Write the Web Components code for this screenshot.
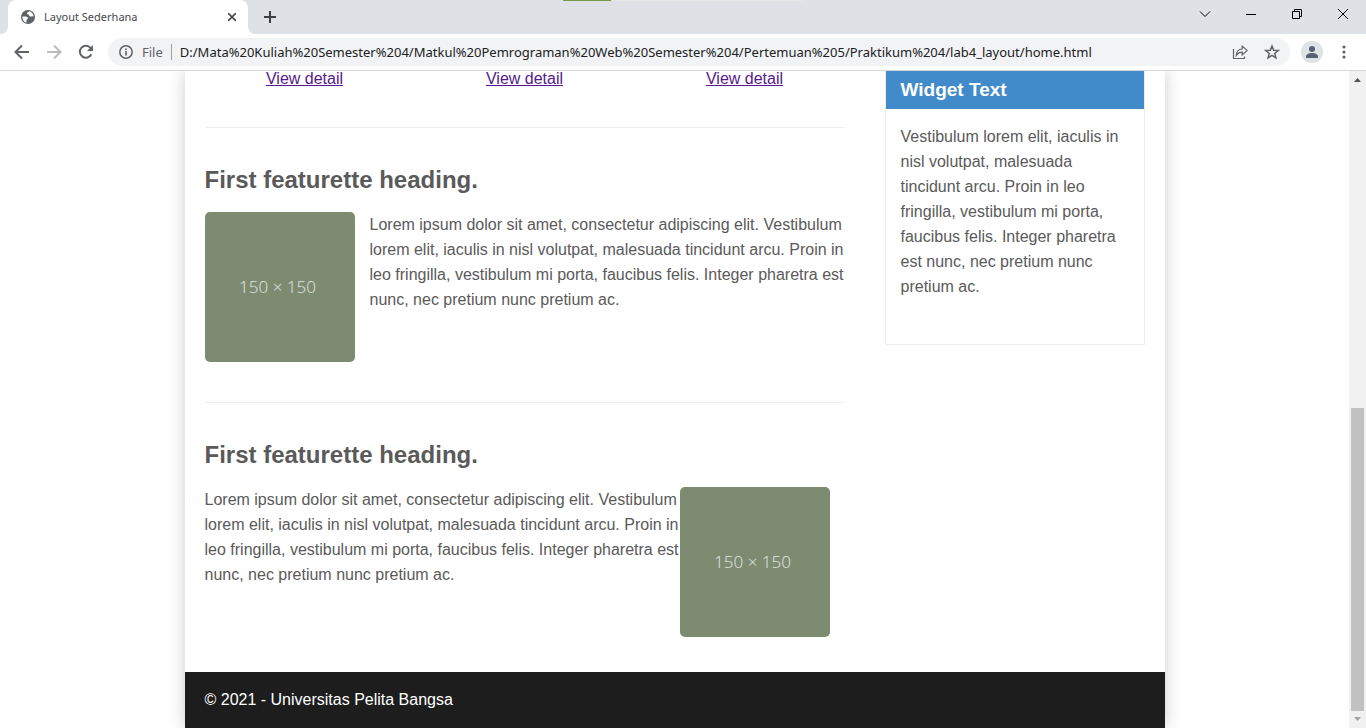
<!DOCTYPE html>
<html lang="id">
<head>
<meta charset="utf-8">
<title>Layout Sederhana</title>
<style>
html, body { height: 100%; margin: 0; }
body { display: flex; flex-direction: column; overflow: hidden; background: #fff; font-family: "Liberation Sans", Arial, sans-serif; font-size: 16px; line-height: 25px; color: #5a5a5a; }
</style>
</head>
<body>
<browser-tabs><browser-tab>Layout Sederhana</browser-tab></browser-tabs>
<browser-toolbar url="D:/Mata%20Kuliah%20Semester%204/Matkul%20Pemrograman%20Web%20Semester%204/Pertemuan%205/Praktikum%204/lab4_layout/home.html"></browser-toolbar>
<page-view>
  <site-page>
    <detail-links></detail-links>
    <feature-item>
      <span slot="heading">First featurette heading.</span>
      Lorem ipsum dolor sit amet, consectetur adipiscing elit. Vestibulum lorem elit, iaculis in nisl volutpat, malesuada tincidunt arcu. Proin in leo fringilla, vestibulum mi porta, faucibus felis. Integer pharetra est nunc, nec pretium nunc pretium ac.
    </feature-item>
    <feature-item reverse>
      <span slot="heading">First featurette heading.</span>
      Lorem ipsum dolor sit amet, consectetur adipiscing elit. Vestibulum lorem elit, iaculis in nisl volutpat, malesuada tincidunt arcu. Proin in leo fringilla, vestibulum mi porta, faucibus felis. Integer pharetra est nunc, nec pretium nunc pretium ac.
    </feature-item>
    <side-widget slot="aside">
      <span slot="heading">Widget Text</span>
      Vestibulum lorem elit, iaculis in nisl volutpat, malesuada tincidunt arcu. Proin in leo fringilla, vestibulum mi porta, faucibus felis. Integer pharetra est nunc, nec pretium nunc pretium ac.
    </side-widget>
    <span slot="footer">© 2021 - Universitas Pelita Bangsa</span>
  </site-page>
</page-view>
<script>
const define = (name, html) => customElements.define(name, class extends HTMLElement {
  constructor() {
    super();
    const t = document.createElement('template');
    t.innerHTML = html;
    this.attachShadow({ mode: 'open' }).append(t.content.cloneNode(true));
  }
  connectedCallback() {
    const url = this.shadowRoot.querySelector('input');
    if (url) url.value = this.getAttribute('url');
  }
});
const button = `button { border: 0; padding: 0; margin: 0; background: none; display: grid; place-items: center; color: inherit; flex: none; }
svg { display: block; fill: none; stroke: currentColor; }`;

define('browser-tabs', `<style>
:host { display: flex; flex: none; height: 34px; background: #dee1e6; padding-left: 8px; position: relative; color: #3c4043; }
${button}
.new { width: 28px; height: 34px; margin-left: 8px; }
.win { display: flex; margin-left: auto; color: #000; }
.win button { width: 46px; height: 28px; }
.share { position: absolute; top: 0; left: calc(50% - 120px); width: 240px; height: 1px; background: linear-gradient(90deg, #739b48 20%, #e6e6e6 20%); }
</style>
<slot></slot>
<button class="new" aria-label="New tab"><svg width="14" height="14" viewBox="0 0 14 14" stroke-width="2"><path d="M7 1v12M1 7h12"/></svg></button>
<div class="win">
<button aria-label="Search tabs"><svg width="12" height="12" viewBox="0 0 12 12"><path d="M1 3.5 6 8.500 11 3.500"/></svg></button>
<button aria-label="Minimize"><svg width="10" height="10" viewBox="0 0 10 10"><path d="M0 5.500h10"/></svg></button>
<button aria-label="Restore"><svg width="10" height="10" viewBox="0 0 10 10"><path d="M.5 2.500h7v7h-7zM2.500 2.500v-2h7v7h-2"/></svg></button>
<button aria-label="Close window"><svg width="10" height="10" viewBox="0 0 10 10"><path d="M0 0 10 10M10 0 0 10"/></svg></button>
</div>
<div class="share"></div>`);

define('browser-tab', `<style>
:host { display: flex; align-items: center; box-sizing: border-box; width: 240px; height: 34px; padding: 0 8px 0 12px; gap: 8px; background: #fff; border-radius: 8px 8px 0 0; position: relative; font: 11px/16px "Noto Sans", "Segoe UI", sans-serif; color: #45494d; }
:host::before, :host::after { content: ""; position: absolute; bottom: 0; width: 8px; height: 8px; }
:host::before { left: -8px; background: radial-gradient(circle at 0 0, transparent 8px, #fff 8px); }
:host::after { right: -8px; background: radial-gradient(circle at 100% 0, transparent 8px, #fff 8px); }
${button}
.title { flex: 1; white-space: nowrap; }
button { width: 16px; height: 16px; }
</style>
<svg width="16" height="16" viewBox="0 0 16 16"><circle cx="8" cy="8" r="7" fill="#5f6368" stroke="none"/><path d="M2.500 7.500C5 7.300 7.500 7.500 8 9c.3 1.200-1.500 1-1.500 2.200V13.600C4 13.300 2.300 11 2.500 7.500zM9.500 2.300c-.8 1-2.500.7-2.500 2.200 0 1 1.600.5 2 1.500.4 1.200 1.300 1.700 2.300 1.500s1.500-.6 2.300.2C13.500 5 12 2.800 9.500 2.300z" fill="#fff" stroke="none"/></svg>
<span class="title"><slot></slot></span>
<button aria-label="Close tab"><svg width="8" height="8" viewBox="0 0 8 8" stroke-width="1.600"><path d="M0 0 8 8M8 0 0 8"/></svg></button>`);

define('browser-toolbar', `<style>
:host { display: flex; flex: none; align-items: center; height: 36px; padding: 0 8px; gap: 4px; border-bottom: 1px solid #d5d7da; background: #fff; color: #5f6368; font: 13px/20px "Noto Sans", "Segoe UI", sans-serif; }
${button}
button { width: 28px; height: 28px; }
.dim { color: #babcbe; }
.box { flex: 1; min-width: 0; display: flex; align-items: center; height: 28px; margin: 0 4px; padding: 0 4px; border-radius: 14px; background: #f1f3f4; gap: 4px; }
label { padding: 0 8px 0 0; margin-left: -2px; border-right: 1px solid #9aa0a6; line-height: 16px; }
input { flex: 1; min-width: 0; border: 0; padding: 0; margin-left: 4px; background: none; font: inherit; color: #202124; outline: 0; }
</style>
<button aria-label="Back"><svg width="16" height="16" viewBox="0 0 16 16" stroke-width="2"><path d="M15 8H2M8 1.500 1.500 8 8 14.500"/></svg></button>
<button class="dim" aria-label="Forward"><svg width="16" height="16" viewBox="0 0 16 16" stroke-width="2"><path d="M1 8h13M8 1.500 14.500 8 8 14.500"/></svg></button>
<button aria-label="Reload"><svg width="16" height="16" viewBox="0 0 16 16" stroke-width="2"><path d="M13.300 10.300A6 6 0 1 1 12.600 4L14 5.400"/><path d="M15 1v6H9z" fill="currentColor" stroke="none"/></svg></button>
<div class="box">
<button aria-label="Site information"><svg width="16" height="16" viewBox="0 0 16 16"><circle cx="8" cy="8" r="6.200" stroke-width="1.500"/><path d="M8 7v4.500M8 4.500V6" stroke-width="1.600"/></svg></button>
<label for="url">File</label><input id="url" type="text" spellcheck="false">
<button aria-label="Share"><svg width="16" height="16" viewBox="0 0 16 16" stroke-width="1.200"><path d="M1.500 5v9.500h11v-2"/><path d="M4.300 11.300C4.500 7.500 6.500 5.200 10.200 5V2l5 4.500-5 4.500V8.200C7.500 8.200 5.700 9.200 4.300 11.300z"/></svg></button>
<button aria-label="Bookmark"><svg width="16" height="16" viewBox="0 0 16 16" stroke-width="1.500"><path d="M8 2l1.700 4.200 4.500.3-3.500 2.900 1.200 4.400L8 11.400l-3.900 2.400 1.200-4.400-3.500-2.900 4.500-.3z"/></svg></button>
</div>
<button aria-label="Profile"><svg width="22" height="22" viewBox="0 0 22 22"><circle cx="11" cy="11" r="11" fill="#dee1e6" stroke="none"/><g fill="#566176" stroke="none"><circle cx="11" cy="8" r="3"/><path d="M5 17v-1.500c0-2.300 3-3.500 6-3.500s6 1.200 6 3.500V17z"/></g></svg></button>
<button aria-label="Menu"><svg width="4" height="14" viewBox="0 0 4 14"><g fill="#5f6368" stroke="none"><circle cx="2" cy="2" r="1.600"/><circle cx="2" cy="7" r="1.600"/><circle cx="2" cy="12" r="1.600"/></g></svg></button>`);

define('page-view', `<style>
:host { display: flex; flex: 1; min-height: 0; }
.view { flex: 1; overflow: hidden; }
.bar { width: 17px; background: #f1f1f1; display: flex; flex-direction: column; }
.bar svg { display: block; flex: none; }
.gap { flex: 320; }
.thumb { flex: 303; margin: 0 2px; background: #c1c1c1; }
</style>
<div class="view"><slot></slot></div>
<div class="bar">
<svg width="17" height="17" viewBox="0 0 17 17"><path d="M5 11 8.500 7 12 11z" fill="#505050"/></svg>
<div class="gap"></div><div class="thumb"></div>
<svg width="17" height="17" viewBox="0 0 17 17"><path d="M5 6h7L8.500 10z" fill="#a3a3a3"/></svg>
</div>`);

define('site-page', `<style>
:host { display: flex; flex-direction: column; max-width: 980px; min-height: 100%; margin: 0 auto; box-shadow: 0 0 16px #ccc; background: #fff; }
.cols { display: grid; grid-template-columns: minmax(0, 1fr) 260px; gap: 40px; padding: 0 20px 35px; flex: 1; align-items: start; }
footer { background: #1d1d1d; color: #fff; padding: 15px 20px 16px; }
</style>
<div class="cols"><main><slot></slot></main><aside><slot name="aside"></slot></aside></div>
<footer><slot name="footer"></slot></footer>`);

define('detail-links', `<style>
:host { display: grid; grid-template-columns: repeat(3, 1fr); gap: 20px; text-align: center; line-height: 16px; }
a { color: #551a8b; }
</style>
<div><a href="#">View detail</a></div><div><a href="#">View detail</a></div><div><a href="#">View detail</a></div>`);

define('feature-item', `<style>
:host { display: block; border-top: 1px solid #eee; margin-top: 40px; padding-top: 39px; }
h2 { margin: 0 0 20px; font-size: 24px; line-height: 25px; }
.row { display: flex; align-items: flex-start; }
:host([reverse]) .row { flex-direction: row-reverse; }
.pic { flex: none; box-sizing: border-box; width: 150px; height: 150px; padding: 0 4px 2px 0; margin-right: 15px; border-radius: 5px; background: #7d8b71; color: #e4e7e1; display: grid; place-items: center; font-family: "Open Sans", sans-serif; font-weight: 300; font-size: 17px; }
p { flex: 1; margin: 0; }
</style>
<h2><slot name="heading"></slot></h2>
<div class="row"><div class="pic">150 × 150</div><p><slot></slot></p></div>`);

define('side-widget', `<style>
:host { display: block; border: 1px solid #eee; border-top: 0; }
h3 { margin: 0; padding: 6px 15px 7px; background: #428bca; color: #fff; font-size: 19px; line-height: 25px; }
p { margin: 0; padding: 15px 15px 45px; }
</style>
<h3><slot name="heading"></slot></h3><p><slot></slot></p>`);
</script>
</body>
</html>
